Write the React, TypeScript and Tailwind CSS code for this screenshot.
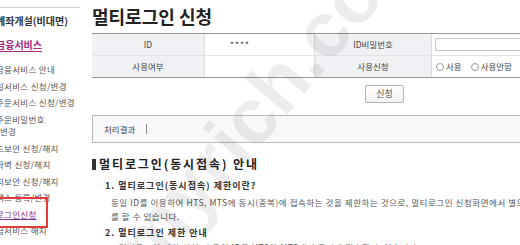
const sideItems: { label: string; second?: string; active?: boolean }[] = [
  { label: "금융서비스 안내" },
  { label: "일서비스 신청/변경" },
  { label: "주문서비스 신청/변경" },
  { label: "주문비밀번호", second: "변경" },
  { label: "드보안 신청/해지" },
  { label: "화벽 신청/해지" },
  { label: "피보안 신청/해지" },
  { label: "팩스 등록/변경" },
  { label: "로그인신청", active: true },
  { label: "금서비스 해지" },
];

function Radio({ label }: { label: string }) {
  return (
    <label className="flex items-center gap-[2px]">
      <span className="size-[8px] rounded-full border border-[#9a9a9a] bg-white" />
      <span>{label}</span>
    </label>
  );
}

export default function App() {
  return (
    <div className="relative flex h-[245px] w-[520px] overflow-hidden bg-white font-['Noto_Sans_CJK_KR','Liberation_Sans',sans-serif] text-[#444]">
      {/* left menu, scrolled so its left edge is cut */}
      <aside className="w-[80px] shrink-0 overflow-hidden pt-[7px]">
        <div className="flex h-[25px] items-center border-t border-[#cfcfcf]">
          <span className="-ml-[4px] whitespace-nowrap text-[10px] font-bold text-[#333]">계좌개설(비대면)</span>
        </div>
        <div className="flex h-[25px] items-center">
          <span className="-ml-[4px] whitespace-nowrap text-[10px] font-bold text-[#a4287e] underline underline-offset-2">
            금융서비스
          </span>
        </div>
        <ul className="pt-[2px] text-[8.5px] leading-[12.5px] tracking-[0.3px] text-[#555]">
          {sideItems.map((it) => (
            <li
              key={it.label}
              className={`-ml-[4px] mt-[4px] whitespace-nowrap ${it.active ? "text-[#7a3590] underline underline-offset-1" : ""}`}
            >
              {it.label}
              {it.second && <div className="ml-[4px]">{it.second}</div>}
            </li>
          ))}
        </ul>
      </aside>

      <main className="ml-[12px] w-[585px] shrink-0">
        <h1 className="h-[33px] pt-[5px] text-[18px] font-bold leading-[22px] text-[#222]">멀티로그인 신청</h1>

        <div className="border-y border-[#959595] text-[8.5px] text-[#444]">
          <div className="flex h-[22px] border-b border-[#e2e2e2]">
            <div className="flex w-[113px] items-center justify-center border-r border-[#dcdcdc] bg-[#eff1f5]">ID</div>
            <div className="flex w-[110px] items-center border-r border-[#dcdcdc] pl-[25px] tracking-[1px]">****</div>
            <div className="flex w-[117px] items-center justify-center border-r border-[#dcdcdc] bg-[#eff1f5]">ID비밀번호</div>
            <div className="flex flex-1 items-center pl-[3px]">
              <div className="h-[13px] w-[170px] border border-[#c8c8c8] bg-white" />
            </div>
          </div>
          <div className="flex h-[21px]">
            <div className="flex w-[113px] items-center justify-center border-r border-[#dcdcdc] bg-[#eff1f5]">사용여부</div>
            <div className="w-[110px] border-r border-[#dcdcdc]" />
            <div className="flex w-[117px] items-center justify-center border-r border-[#dcdcdc] bg-[#eff1f5]">사용신청</div>
            <div className="flex flex-1 items-center gap-[9px] pl-[4px]">
              <Radio label="사용" />
              <Radio label="사용안함" />
            </div>
          </div>
        </div>

        <div className="mt-[7px] flex justify-center">
          <button className="h-[18px] w-[39px] rounded-[2px] border border-[#b4b4b4] bg-gradient-to-b from-white to-[#f3f3f3] text-[9px] text-[#555]">
            신청
          </button>
        </div>

        <div className="mt-[12px] flex h-[28px] items-center border border-[#b8b8b8] bg-[#f8f8fa] pl-[11px] text-[8.5px] text-[#444]">
          <span>처리결과</span>
          <span className="ml-[11px] h-[10px] w-px bg-[#8a8a8a]" />
        </div>

        <div className="mt-[15px] flex items-center gap-[3px]">
          <span className="h-[11px] w-[4px] bg-[#333]" />
          <h2 className="text-[12px] font-bold leading-[12px] tracking-[1.9px] text-[#222]">멀티로그인(동시접속) 안내</h2>
        </div>

        <h3 className="mt-[10px] pl-[13px] text-[9px] font-bold leading-[12px] tracking-[1px] text-[#333]">1. 멀티로그인(동시접속) 제한이란?</h3>
        <div className="mt-[2.5px] whitespace-nowrap pl-[19px] text-[8.5px] leading-[14px] tracking-[0.55px] text-[#555]">
          <p>동일 ID를 이용하여 HTS, MTS에 동시(중복)에 접속하는 것을 제한하는 것으로, 멀티로그인 신청화면에서 별도 설정 해제</p>
          <p>를 할 수 있습니다.</p>
        </div>

        <h3 className="mt-[4.5px] pl-[13px] text-[9px] font-bold leading-[12px] tracking-[1px] text-[#333]">2. 멀티로그인 제한 안내</h3>
        <p className="mt-[1px] whitespace-nowrap pl-[19px] text-[8.5px] leading-[14px] tracking-[0.55px] text-[#555]">
          · 멀티로그인 제한 신청 시 동일 ID로 HTS와 MTS에서 동시에 접속할 수 없습니다.
        </p>
      </main>

      {/* red highlight drawn on the capture */}
      <div className="pointer-events-none absolute left-[-10px] top-[197px] h-[31px] w-[58px] border-2 border-[#e53a3a]" />

      {/* watermark */}
      <div className="pointer-events-none absolute left-[240px] top-[130px] -translate-x-1/2 -translate-y-1/2 -rotate-[50deg] whitespace-nowrap font-['Liberation_Sans',sans-serif] text-[78px] font-bold text-black/[0.07]">
        ohmyrich.com
      </div>
    </div>
  );
}
